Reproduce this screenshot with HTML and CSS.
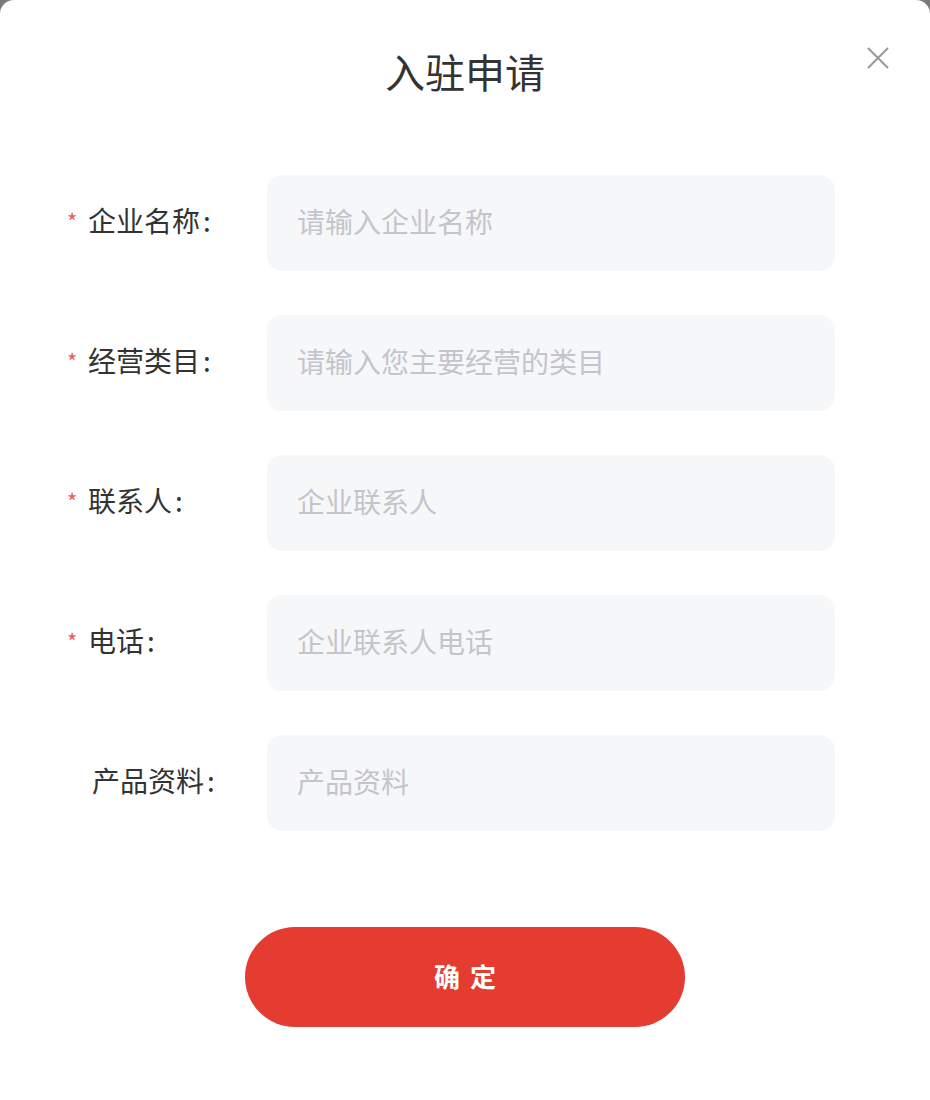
FILE: index.html
```html
<!DOCTYPE html>
<html lang="zh-CN">
<head>
    <meta charset="UTF-8">
    <meta name="viewport" content="width=device-width, initial-scale=1.0">
    <title>入驻申请</title>
    <link rel="stylesheet" href="styles.css">
</head>
<body>

<div class="dialog">
    <div class="dialog-header">
        <h2 class="dialog-title">入驻申请</h2>
        <button class="close-button" aria-label="关闭">
            <svg width="22" height="22" viewBox="0 0 22 22">
                <path d="M1 1 L21 21 M21 1 L1 21" stroke="#999999" stroke-width="2" fill="none"/>
            </svg>
        </button>
    </div>

    <form class="apply-form">
        <div class="form-row">
            <label class="form-label"><span class="required">*</span>企业名称<span class="colon">:</span></label>
            <input type="text" class="form-input" placeholder="请输入企业名称">
        </div>
        <div class="form-row">
            <label class="form-label"><span class="required">*</span>经营类目<span class="colon">:</span></label>
            <input type="text" class="form-input" placeholder="请输入您主要经营的类目">
        </div>
        <div class="form-row">
            <label class="form-label"><span class="required">*</span>联系人<span class="colon">:</span></label>
            <input type="text" class="form-input" placeholder="企业联系人">
        </div>
        <div class="form-row">
            <label class="form-label"><span class="required">*</span>电话<span class="colon">:</span></label>
            <input type="text" class="form-input" placeholder="企业联系人电话">
        </div>
        <div class="form-row">
            <label class="form-label optional">产品资料<span class="colon">:</span></label>
            <input type="text" class="form-input" placeholder="产品资料">
        </div>

        <button type="button" class="submit-button">确定</button>
    </form>
</div>

</body>
</html>
```

FILE: styles.css
```css
body {
    margin: 0;
    background-color: #7a7a7a;
    font-family: "Noto Sans CJK SC", "Noto Sans", sans-serif;
}
.dialog {
    position: relative;
    background-color: #ffffff;
    min-height: 1100px;
    border-radius: 14px 14px 0 0;
    box-sizing: border-box;
    padding: 46px 0 60px;
}
.dialog-header {
    text-align: center;
    height: 54px;
}
.dialog-title {
    margin: 0;
    font-size: 40px;
    font-weight: 400;
    line-height: 50px;
    color: #333333;
}
.close-button {
    position: absolute;
    top: 47px;
    right: 41px;
    padding: 0;
    border: none;
    background: none;
    cursor: pointer;
    line-height: 0;
}
.apply-form {
    margin-top: 75px;
    padding-left: 67px;
}
.form-row {
    display: flex;
    align-items: center;
    height: 96px;
    margin-bottom: 44px;
}
.form-label {
    width: 200px;
    flex-shrink: 0;
    padding-bottom: 6px;
    font-size: 28px;
    line-height: 40px;
    color: #333333;
    white-space: nowrap;
}
.form-label.optional {
    padding-left: 25px;
    box-sizing: border-box;
}
.required {
    display: inline-block;
    width: 21px;
    font-size: 22px;
    color: #ee5a55;
    vertical-align: 2px;
}
.colon {
    margin-left: 3px;
}
.form-input {
    width: 568px;
    height: 96px;
    box-sizing: border-box;
    border: none;
    outline: none;
    border-radius: 15px;
    background-color: #f6f7f9;
    padding: 0 30px 4px;
    font-family: "Noto Sans CJK SC", "Noto Sans", sans-serif;
    font-size: 28px;
    color: #333333;
}
.form-input::placeholder {
    color: #c3c5cb;
}
.submit-button {
    display: block;
    width: 440px;
    height: 100px;
    margin: 96px 0 0 178px;
    padding-bottom: 5px;
    border: none;
    border-radius: 50px;
    background-color: #e43c31;
    color: #ffffff;
    font-family: "Noto Sans CJK SC", "Noto Sans", sans-serif;
    font-size: 26px;
    font-weight: 700;
    letter-spacing: 10px;
    text-indent: 10px;
    cursor: pointer;
}
```
